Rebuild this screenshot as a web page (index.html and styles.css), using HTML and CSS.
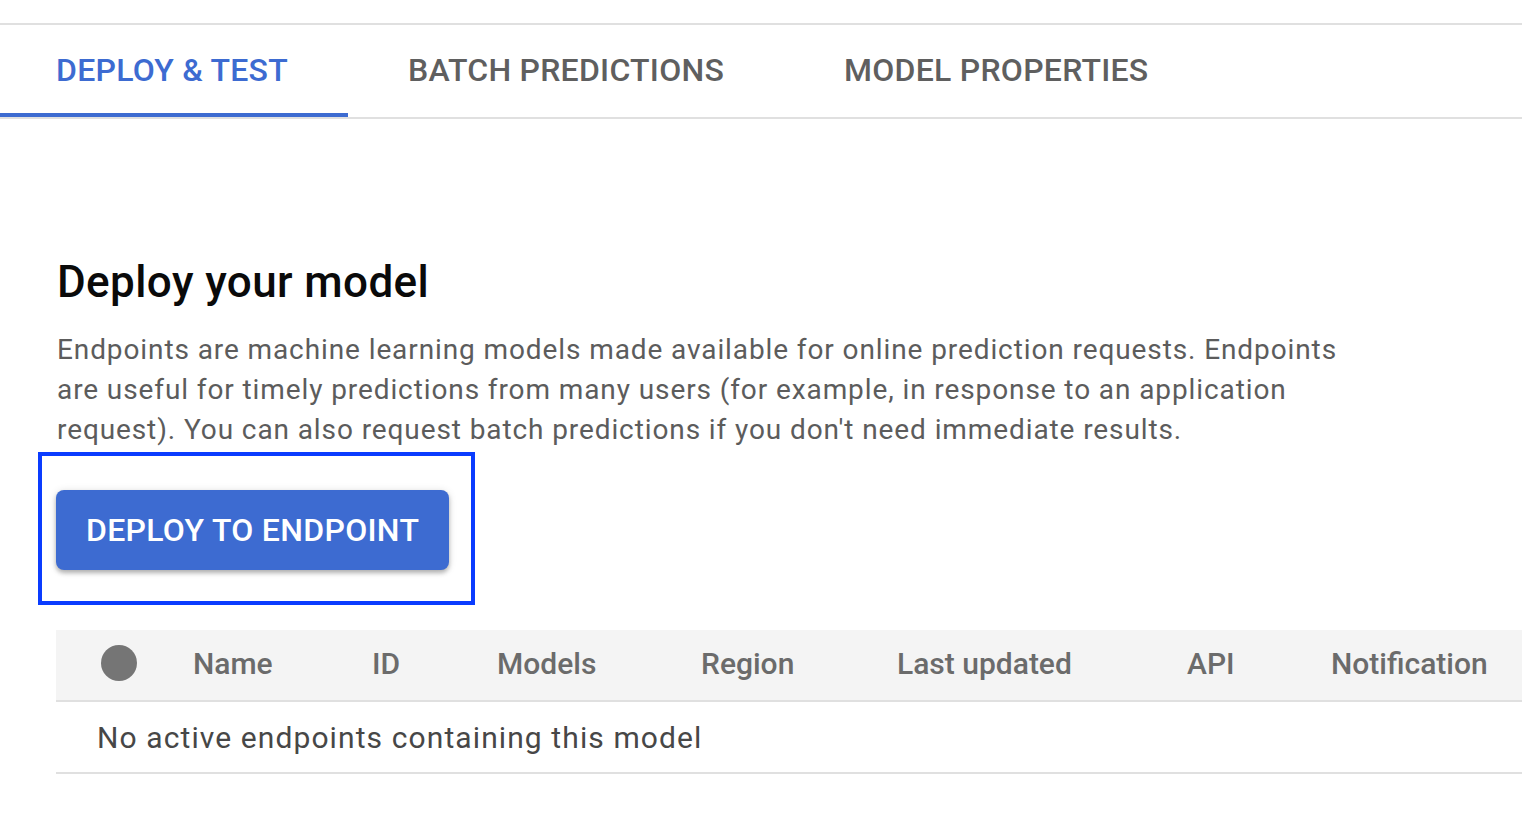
FILE: index.html
```html
<!DOCTYPE html>
<html>
<head>
<meta charset="utf-8">
<link rel="stylesheet" href="styles.css">
</head>
<body>
<nav class="tabs">
  <div class="tab tab-active">DEPLOY &amp; TEST</div>
  <div class="tab">BATCH PREDICTIONS</div>
  <div class="tab">MODEL PROPERTIES</div>
</nav>
<main class="content">
  <h1 class="title">Deploy your model</h1>
  <p class="desc">Endpoints are machine learning models made available for online prediction requests. Endpoints are useful for timely predictions from many users (for example, in response to an application request). You can also request batch predictions if you don't need immediate results.</p>
  <div class="btn-wrap">
    <button class="btn-primary">DEPLOY TO ENDPOINT</button>
    <div class="highlight"></div>
  </div>
  <div class="table">
    <div class="row head">
      <div class="cell"><span class="dot"></span></div>
      <div class="cell">Name</div>
      <div class="cell">ID</div>
      <div class="cell">Models</div>
      <div class="cell">Region</div>
      <div class="cell">Last updated</div>
      <div class="cell">API</div>
      <div class="cell">Notification</div>
    </div>
    <div class="row empty">No active endpoints containing this model</div>
  </div>
</main>
</body>
</html>
```
FILE: styles.css
```css
html, body {
  margin: 0;
  padding: 0;
  background: #ffffff;
  font-family: Roboto, "Liberation Sans", Arial, sans-serif;
  overflow: hidden;
}

.tabs {
  margin-top: 23px;
  display: flex;
  height: 92px;
  border-top: 2px solid #e0e0e0;
  border-bottom: 2px solid #e0e0e0;
}

.tab {
  box-sizing: border-box;
  height: 92px;
  padding: 2px 60px 0 60px;
  display: flex;
  align-items: center;
  font-size: 32px;
  font-weight: 500;
  letter-spacing: 0.25px;
  color: #5f5f5f;
  border-bottom: 4px solid transparent;
  white-space: nowrap;
}

.tab-active {
  padding-left: 56px;
  color: #3d6bd1;
  border-bottom-color: #3d6bd1;
}

.content {
  padding-left: 56px;
}

.title {
  margin: 137px 0 0 1px;
  font-size: 44px;
  line-height: 52px;
  font-weight: 500;
  letter-spacing: 0.4px;
  color: #0a0a0a;
}

.desc {
  margin: 22px 0 0 1px;
  max-width: 1300px;
  font-size: 28px;
  line-height: 40px;
  letter-spacing: 0.9px;
  color: #5c5c5c;
}

.btn-wrap {
  position: relative;
  display: inline-block;
  margin-top: 40px;
  vertical-align: top;
}

.btn-primary {
  display: block;
  height: 80px;
  padding: 0 30px;
  border: none;
  border-radius: 8px;
  background: #3d6bd1;
  color: #ffffff;
  font-family: Roboto, "Liberation Sans", Arial, sans-serif;
  font-size: 32px;
  font-weight: 500;
  letter-spacing: 0.3px;
  box-shadow: 0 3px 4px rgba(0, 0, 0, 0.25), 0 1px 8px rgba(0, 0, 0, 0.12);
}

.highlight {
  position: absolute;
  top: -38px;
  left: -18px;
  right: -26px;
  bottom: -35px;
  border: 4px solid #0a3cff;
}

.table {
  margin-top: 60px;
}

.row {
  display: grid;
  grid-template-columns: 137px 179px 125px 204px 196px 290px 144px 1fr;
  align-items: center;
  height: 70px;
  border-bottom: 2px solid #e0e0e0;
  white-space: nowrap;
}

.head {
  height: 66px;
  padding-bottom: 4px;
  background: #f4f4f4;
  color: #6b6b6b;
  font-size: 30px;
  font-weight: 500;
}

.dot {
  display: block;
  width: 36px;
  height: 36px;
  margin-left: 45px;
  border-radius: 50%;
  background: #757575;
}

.empty {
  display: flex;
  padding-left: 41px;
  font-size: 30px;
  letter-spacing: 1.1px;
  color: #474747;
}
```
